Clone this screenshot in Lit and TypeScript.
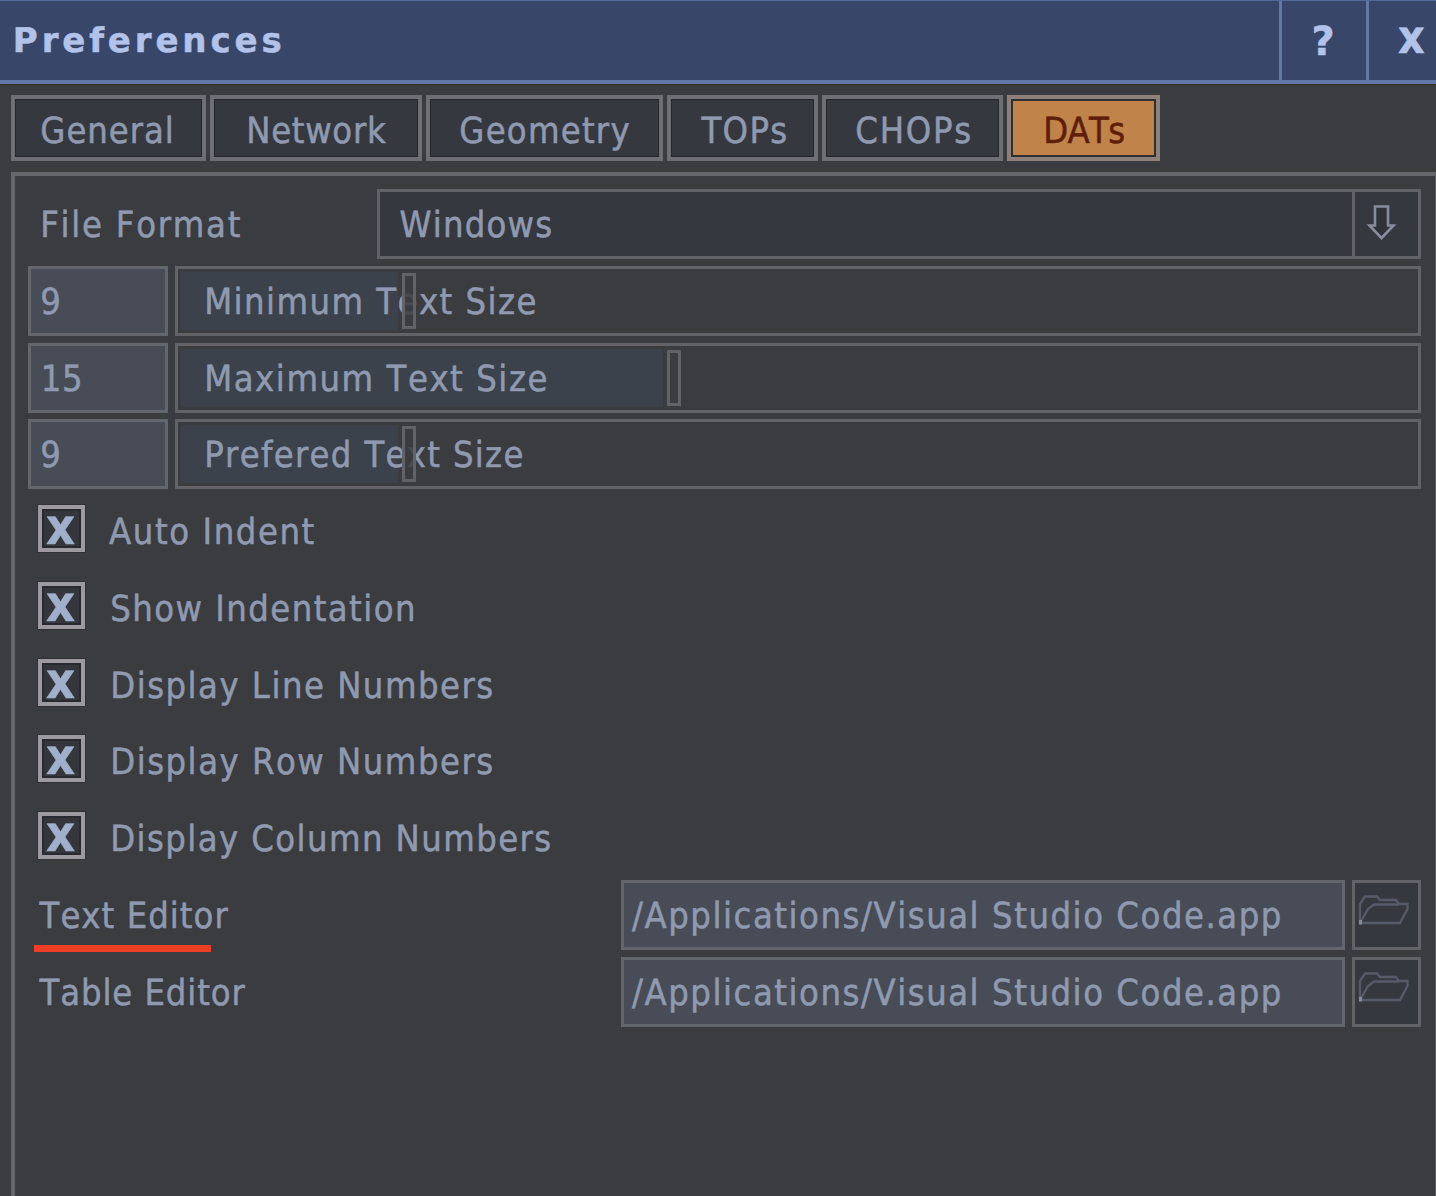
import { LitElement, html, css, svg } from "lit";
import { customElement, property, state } from "lit/decorators.js";

const CONDENSED = '"DejaVu Sans Condensed", "DejaVu Sans", sans-serif';
const WIDE = '"DejaVu Sans", sans-serif';
const PRECISION = 10;

/** A line of text tracked so that its ink spans about `span` pixels, starting `nudge` pixels in. */
@customElement("tracked-text")
class TrackedText extends LitElement {
  @property() text = "";
  @property({ type: Number }) span = 0;
  @property({ type: Number }) nudge = 0;
  @property({ type: Number }) size = 36;
  @property({ type: Boolean }) bold = false;
  @property({ type: Boolean }) wide = false;

  static styles = css`
    :host { display: block; white-space: pre; line-height: 42px; height: 42px; padding-top: 1px; }
    .line {
      display: block;
      font-family: "DejaVu Sans Condensed", "DejaVu Sans", sans-serif;
      font-kerning: none;
      font-variant-ligatures: none;
      text-rendering: geometricPrecision;
      -webkit-text-stroke: 0.5px currentColor;
    }
    .bold { font-weight: 700; }
    .wide { font-family: "DejaVu Sans", sans-serif; }
  `;

  private metrics() {
    const ctx = document.createElement("canvas").getContext("2d")!;
    ctx.font = `${this.bold ? "bold " : ""}${this.size * PRECISION}px ${this.wide ? WIDE : CONDENSED}`;
    ctx.fontKerning = "none";
    const m = ctx.measureText(this.text);
    const ink = (m.actualBoundingBoxLeft + m.actualBoundingBoxRight) / PRECISION;
    const gaps = this.text.length - 1;
    return {
      lead: m.actualBoundingBoxLeft / PRECISION + this.nudge,
      tracking: gaps > 0 ? (this.span - ink) / gaps : 0,
    };
  }

  render() {
    const { lead, tracking } = this.metrics();
    return html`<span
      class="line ${this.bold ? "bold" : ""} ${this.wide ? "wide" : ""}"
      style="font-size:${this.size}px;letter-spacing:${tracking.toFixed(3)}px;margin-left:${lead.toFixed(2)}px"
      >${this.text}</span>`;
  }
}

const label = (text: string, span: number, nudge = 0) =>
  html`<tracked-text .text=${text} .span=${span} .nudge=${nudge}></tracked-text>`;

const heavy = (text: string, span: number, size: number, wide = false, nudge = 0) =>
  html`<tracked-text .text=${text} .span=${span} .size=${size} .bold=${true} .wide=${wide} .nudge=${nudge}></tracked-text>`;

const arrow = svg`<path d="M10 2.500H23V21.500H28.500L16.500 34L4.500 21.500H10Z" fill="#303238" stroke="#858c9c" stroke-width="2.600"/>`;

const folder = svg`
  <path d="M2 30V11L7 3.500H19L22 7H38L41 11H49.500V16L42 30Z" fill="none" stroke="#555b68" stroke-width="2.300"/>
  <path d="M2 30L10 16L16 11.500H41" fill="none" stroke="#555b68" stroke-width="2.300"/>
  <path d="M1 27H4V31.500H1Z" fill="#858c99"/>`;

@customElement("app-root")
class AppRoot extends LitElement {
  @state() private tabs = [
    { name: "General", width: 195, pad: 27, span: 129 },
    { name: "Network", width: 212, pad: 35, span: 137 },
    { name: "Geometry", width: 237, pad: 31, span: 168 },
    { name: "TOPs", width: 151, pad: 30, span: 85 },
    { name: "CHOPs", width: 181, pad: 31, span: 113 },
    { name: "DATs", width: 153, pad: 35, span: 78, on: true },
  ];
  @state() private sliders = [
    { name: "Minimum Text Size", span: 328, value: "9", vspan: 19, vnudge: 1, fill: 220 },
    { name: "Maximum Text Size", span: 339, value: "15", vspan: 36, vnudge: 3, fill: 485 },
    { name: "Prefered Text Size", span: 315, value: "9", vspan: 19, vnudge: 1, fill: 220 },
  ];
  @state() private toggles = [
    { name: "Auto Indent", span: 205, nudge: -1 },
    { name: "Show Indentation", span: 301, nudge: 2 },
    { name: "Display Line Numbers", span: 379, nudge: 3 },
    { name: "Display Row Numbers", span: 379, nudge: 3 },
    { name: "Display Column Numbers", span: 437, nudge: 3 },
  ];
  @state() private editors = [
    { name: "Text Editor", span: 189, marked: true },
    { name: "Table Editor", span: 206 },
  ];

  static styles = css`
    :host {
      display: flex; flex-direction: column;
      width: 1436px; height: 1196px; overflow: hidden;
      background: #3b3c40; color: #8f9ab1;
    }
    * { box-sizing: border-box; }

    .header {
      display: flex; flex: none; height: 84px;
      border-top: 1px solid #526a98; border-bottom: 4px solid #6078a5;
      background: #374669; color: #b2c2e9;
      box-shadow: 0 1px 1px #353329;
    }
    .title { flex: 1; padding: 18px 0 0 13px; }
    .hbtn { width: 87px; border-left: 3px solid #6078a5; padding: 19px 0 0 32px; flex: none; }
    .hbtn.close { width: 70px; padding: 14px 0 0 29px; }

    .tabs { display: flex; flex: none; gap: 4px; padding: 11px 0 0 11px; height: 77px; }
    .tab {
      height: 66px; flex: none; border: 4px solid #6d6e76; background: #363840;
      box-shadow: inset 0 0 0 1px #25262a; padding-top: 11px;
    }
    .tab.on {
      border-color: #8d807b; background: #c08349; color: #5d1f0b;
      box-shadow: inset 0 0 0 2px #2d302c;
    }

    .panel {
      flex: 1; margin: 11px 0 0 11px; padding: 13px 14px 0 13px;
      border: 4px solid #66676c; border-right: 1px solid #5b5c60; border-bottom: 0;
    }
    .row { display: flex; height: 76.75px; }
    .box { height: 70px; border: 3px solid #626368; flex: none; }

    .name { padding-top: 15px; }
    .format .name { width: 349px; padding-left: 13px; }
    .select { width: 1044px; background: #363840; display: flex; }
    .current { flex: 1; padding: 12px 0 0 20px; }
    .drop { width: 66px; border-left: 3px solid #626368; padding: 12px 0 0 10px; }
    .icon { display: block; }

    .slide { gap: 7px; }
    .value { width: 140px; background: #484c56; border-color: #64666d; padding: 12px 0 0 10px; }
    .track { width: 1246px; position: relative; padding: 12px 0 0 27px; }
    .fill { position: absolute; left: 3px; top: 3px; bottom: 3px; background: #3b424c; }
    .over { position: relative; }
    .knob {
      position: absolute; top: 4px; width: 14px; height: 56px;
      border: 3px solid #626368; background: rgba(59, 60, 64, 0.85);
    }

    .toggle { padding: 9px 0 0 10px; }
    .check {
      width: 47px; height: 47px; flex: none; border: 4px solid #9c9aa0; background: #34363c;
      box-shadow: inset 0 0 0 2px #292a2f, 0 0 0 1px #313236; color: #9fafcc; padding: 0 0 0 4px;
    }
    .check tracked-text { margin-top: -4px; }
    .toggle .text { padding: 6px 0 0 25px; }

    .editor .name { width: 593px; padding: 15px 0 0 11px; position: relative; }
    .mark { position: absolute; left: 6px; top: 65px; width: 177px; height: 7px; background: #ec3e24; }
    .path { width: 724px; background: #484c56; border-color: #64666d; padding: 12px 0 0 8px; }
    .browse { width: 69px; margin-left: 7px; background: #363840; padding: 10px 0 0 3px; }
  `;

  render() {
    return html`
      <div class="header">
        <div class="title">${heavy("Preferences", 265, 34, true, 2.5)}</div>
        <div class="hbtn">${heavy("?", 22, 40, true)}</div>
        <div class="hbtn close">${heavy("x", 27, 46)}</div>
      </div>
      <div class="tabs">
        ${this.tabs.map(
          (t) => html`<div class="tab ${t.on ? "on" : ""}" style="width:${t.width}px;padding-left:${t.pad}px">
            ${label(t.name, t.span)}
          </div>`
        )}
      </div>
      <div class="panel">
        <div class="row format">
          <div class="name">${label("File Format", 197, 2)}</div>
          <div class="box select">
            <div class="current">${label("Windows", 151)}</div>
            <div class="drop"><svg class="icon" width="32" height="38">${arrow}</svg></div>
          </div>
        </div>
        ${this.sliders.map(
          (s) => html`<div class="row slide">
            <div class="box value">${label(s.value, s.vspan, s.vnudge)}</div>
            <div class="box track">
              <div class="fill" style="width:${s.fill - 3}px"></div>
              <div class="over">${label(s.name, s.span, 2)}</div>
              <div class="knob" style="left:${s.fill + 4}px"></div>
            </div>
          </div>`
        )}
        ${this.toggles.map(
          (t) => html`<div class="row toggle">
            <div class="check">${heavy("x", 29, 50)}</div>
            <div class="text">${label(t.name, t.span, t.nudge)}</div>
          </div>`
        )}
        ${this.editors.map(
          (e) => html`<div class="row editor">
            <div class="name">${label(e.name, e.span)}${e.marked ? html`<div class="mark"></div>` : ""}</div>
            <div class="box path">${label("/Applications/Visual Studio Code.app", 648)}</div>
            <div class="box browse"><svg class="icon" width="52" height="36">${folder}</svg></div>
          </div>`
        )}
      </div>
    `;
  }
}
